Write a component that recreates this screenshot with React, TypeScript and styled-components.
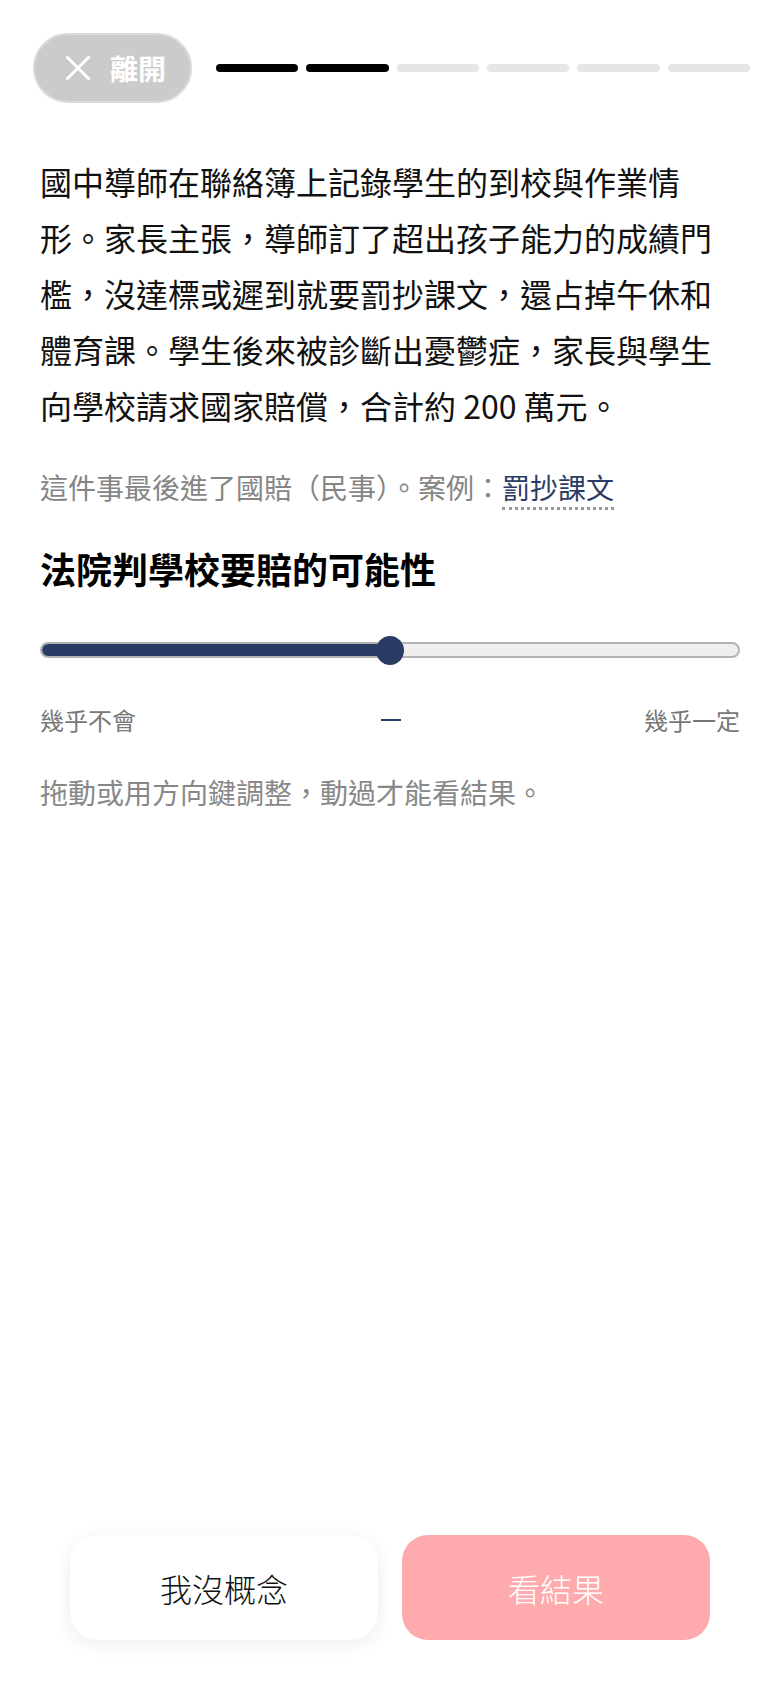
import React from "react";
import styled, { createGlobalStyle } from "styled-components";

const GlobalStyle = createGlobalStyle`
  html, body {
    margin: 0;
    padding: 0;
    background: #ffffff;
  }
  body {
    font-family: "Noto Sans CJK TC", "Noto Sans", "Noto Sans CJK SC", sans-serif;
    color: #111111;
  }
  * { box-sizing: border-box; }
`;

const Page = styled.div`
  min-height: 100vh;
  display: flex;
  flex-direction: column;
`;

const Header = styled.header`
  display: flex;
  align-items: center;
  gap: 24px;
  padding: 33px 30px 0 33px;
`;

const CloseButton = styled.button`
  display: flex;
  align-items: center;
  gap: 20px;
  height: 70px;
  padding: 0 24px 0 31px;
  border-radius: 35px;
  border: 2px solid #dadada;
  background: #cbcbcb;
  color: #ffffff;
  font-family: inherit;
  font-size: 28px;
  font-weight: 700;
  line-height: 1;
  cursor: pointer;
  flex-shrink: 0;
`;

const Progress = styled.div`
  flex: 1;
  display: grid;
  grid-template-columns: repeat(6, 1fr);
  gap: 8px;
`;

const Segment = styled.div<{ $done: boolean }>`
  height: 8px;
  border-radius: 4px;
  background: ${(p) => (p.$done ? "#000000" : "#e6e6e6")};
`;

const Main = styled.main`
  padding: 0 40px;
  display: flex;
  flex-direction: column;
`;

const Story = styled.p`
  margin: 50px 0 0;
  font-size: 32px;
  line-height: 56px;
  color: #111111;
`;

const Source = styled.p`
  margin: 33px 0 0;
  font-size: 28px;
  line-height: 42px;
  color: #858585;
`;

const CaseLink = styled.a`
  color: #2b3c64;
  text-decoration: none;
  border-bottom: 3px dotted #999999;
`;

const Question = styled.h2`
  margin: 35px 0 0;
  font-size: 36px;
  line-height: 50px;
  font-weight: 700;
  color: #000000;
`;

const SliderArea = styled.div`
  margin-top: 42px;
  position: relative;
  height: 30px;
  display: flex;
  align-items: center;
`;

const Track = styled.div`
  position: relative;
  width: 100%;
  height: 16px;
  border-radius: 8px;
  background: #efefef;
  border: 2px solid #b3b3b3;
  overflow: hidden;
`;

const Fill = styled.div`
  position: absolute;
  left: 0;
  top: -2px;
  bottom: -2px;
  background: #2b3c64;
  border-bottom: 2px solid #4a5470;
  border-radius: 8px 0 0 8px;
`;

const Thumb = styled.div`
  position: absolute;
  top: 50%;
  width: 28px;
  height: 29px;
  margin-left: -14px;
  margin-top: -14.5px;
  border-radius: 50%;
  background: #2b3c64;
`;

const Scale = styled.div`
  margin-top: 38px;
  display: grid;
  grid-template-columns: 1fr auto 1fr;
  align-items: center;
  font-size: 24px;
  line-height: 34px;
  color: #777777;
`;

const ScaleEnd = styled.span<{ $right?: boolean }>`
  text-align: ${(p) => (p.$right ? "right" : "left")};
`;

const ScaleValue = styled.span`
  width: 20px;
  height: 2px;
  background: #2b3c64;
  margin-left: 2px;
`;

const Hint = styled.p`
  margin: 35px 0 0;
  font-size: 28px;
  line-height: 40px;
  color: #888888;
`;

const Footer = styled.footer`
  margin-top: auto;
  padding: 0 70px 48px;
  display: grid;
  grid-template-columns: 1fr 1fr;
  gap: 24px;
`;

const ActionButton = styled.button<{ $primary?: boolean }>`
  height: 105px;
  border-radius: 26px;
  border: none;
  font-family: inherit;
  font-size: 32px;
  font-weight: 300;
  cursor: pointer;
  background: ${(p) => (p.$primary ? "#ffaaad" : "#ffffff")};
  color: ${(p) => (p.$primary ? "#ffffff" : "#111111")};
  box-shadow: ${(p) =>
    p.$primary ? "none" : "0 4px 18px rgba(0, 0, 0, 0.07), 0 0 2px rgba(0,0,0,0.04)"};
`;

const CloseIcon = () => (
  <svg width="24" height="24" viewBox="0 0 24 24" fill="none">
    <path d="M1.5 1.5 L22.5 22.5 M22.5 1.5 L1.5 22.5" stroke="#ffffff" strokeWidth="3" strokeLinecap="round" />
  </svg>
);

export default function App() {
  const value = 50;
  const steps = [true, true, false, false, false, false];
  return (
    <>
      <GlobalStyle />
      <Page>
        <Header>
          <CloseButton>
            <CloseIcon />
            <span>離開</span>
          </CloseButton>
          <Progress>
            {steps.map((d, i) => (
              <Segment key={i} $done={d} />
            ))}
          </Progress>
        </Header>
        <Main>
          <Story>
            國中導師在聯絡簿上記錄學生的到校與作業情形。家長主張，導師訂了超出孩子能力的成績門檻，沒達標或遲到就要罰抄課文，還占掉午休和體育課。學生後來被診斷出憂鬱症，家長與學生向學校請求國家賠償，合計約 200 萬元。
          </Story>
          <Source>
            這件事最後進了國賠（民事）。案例：<CaseLink href="#">罰抄課文</CaseLink>
          </Source>
          <Question>法院判學校要賠的可能性</Question>
          <SliderArea>
            <Track>
              <Fill style={{ width: `${value}%` }} />
            </Track>
            <Thumb style={{ left: `calc(14px + (100% - 28px) * ${value / 100})` }} />
          </SliderArea>
          <Scale>
            <ScaleEnd>幾乎不會</ScaleEnd>
            <ScaleValue />
            <ScaleEnd $right>幾乎一定</ScaleEnd>
          </Scale>
          <Hint>拖動或用方向鍵調整，動過才能看結果。</Hint>
        </Main>
        <Footer>
          <ActionButton>我沒概念</ActionButton>
          <ActionButton $primary>看結果</ActionButton>
        </Footer>
      </Page>
    </>
  );
}
